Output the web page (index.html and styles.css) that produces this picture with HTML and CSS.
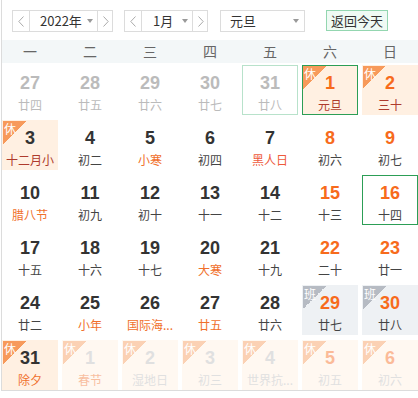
FILE: index.html
```html
<!DOCTYPE html>
<html lang="zh">
<head>
<meta charset="utf-8">
<link rel="stylesheet" href="styles.css">
</head>
<body>
<div class="cal">
  <div class="bar">
    <div class="picker year">
      <span class="arr"><svg width="6" height="11" viewBox="0 0 6 11"><polyline points="5.5,0.5 0.8,5.5 5.5,10.5" fill="none" stroke="#aaa" stroke-width="1"/></svg></span>
      <span class="mid"><span class="val">2022年</span><i class="tri"></i></span>
      <span class="arr"><svg width="6" height="11" viewBox="0 0 6 11"><polyline points="0.5,0.5 5.2,5.5 0.5,10.5" fill="none" stroke="#aaa" stroke-width="1"/></svg></span>
    </div>
    <div class="picker month">
      <span class="arr"><svg width="6" height="11" viewBox="0 0 6 11"><polyline points="5.5,0.5 0.8,5.5 5.5,10.5" fill="none" stroke="#aaa" stroke-width="1"/></svg></span>
      <span class="mid"><span class="val">1月</span><i class="tri"></i></span>
      <span class="arr"><svg width="6" height="11" viewBox="0 0 6 11"><polyline points="0.5,0.5 5.2,5.5 0.5,10.5" fill="none" stroke="#aaa" stroke-width="1"/></svg></span>
    </div>
    <div class="select"><span class="val">元旦</span><i class="tri"></i></div>
    <div class="today">返回今天</div>
  </div>
  <div class="week">
    <span>一</span><span>二</span><span>三</span><span>四</span><span>五</span><span>六</span><span>日</span>
  </div>
  <div class="grid">
    <div class="cell other"><b>27</b><em>廿四</em></div>
    <div class="cell other"><b>28</b><em>廿五</em></div>
    <div class="cell other"><b>29</b><em>廿六</em></div>
    <div class="cell other"><b>30</b><em>廿七</em></div>
    <div class="cell other hover"><b>31</b><em>廿八</em></div>
    <div class="cell rest wkend hl sel"><i class="badge">休</i><b>1</b><em>元旦</em></div>
    <div class="cell rest wkend hl"><i class="badge">休</i><b>2</b><em>三十</em></div>

    <div class="cell rest hl"><i class="badge">休</i><b>3</b><em>十二月小</em></div>
    <div class="cell"><b>4</b><em>初二</em></div>
    <div class="cell fest"><b>5</b><em>小寒</em></div>
    <div class="cell"><b>6</b><em>初四</em></div>
    <div class="cell fest red"><b>7</b><em>黑人日</em></div>
    <div class="cell wkend"><b>8</b><em>初六</em></div>
    <div class="cell wkend"><b>9</b><em>初七</em></div>

    <div class="cell fest"><b>10</b><em>腊八节</em></div>
    <div class="cell"><b>11</b><em>初九</em></div>
    <div class="cell"><b>12</b><em>初十</em></div>
    <div class="cell"><b>13</b><em>十一</em></div>
    <div class="cell"><b>14</b><em>十二</em></div>
    <div class="cell wkend"><b>15</b><em>十三</em></div>
    <div class="cell wkend sel"><b>16</b><em>十四</em></div>

    <div class="cell"><b>17</b><em>十五</em></div>
    <div class="cell"><b>18</b><em>十六</em></div>
    <div class="cell"><b>19</b><em>十七</em></div>
    <div class="cell fest"><b>20</b><em>大寒</em></div>
    <div class="cell"><b>21</b><em>十九</em></div>
    <div class="cell wkend"><b>22</b><em>二十</em></div>
    <div class="cell wkend"><b>23</b><em>廿一</em></div>

    <div class="cell"><b>24</b><em>廿二</em></div>
    <div class="cell fest"><b>25</b><em>小年</em></div>
    <div class="cell fest"><b>26</b><em>国际海...</em></div>
    <div class="cell fest"><b>27</b><em>廿五</em></div>
    <div class="cell"><b>28</b><em>廿六</em></div>
    <div class="cell work wkend"><i class="badge">班</i><b>29</b><em>廿七</em></div>
    <div class="cell work wkend"><i class="badge">班</i><b>30</b><em>廿八</em></div>

    <div class="cell rest fest"><i class="badge">休</i><b>31</b><em>除夕</em></div>
    <div class="cell rest other fade fest"><i class="badge">休</i><b>1</b><em>春节</em></div>
    <div class="cell rest other fade"><i class="badge">休</i><b>2</b><em>湿地日</em></div>
    <div class="cell rest other fade"><i class="badge">休</i><b>3</b><em>初三</em></div>
    <div class="cell rest other fade"><i class="badge">休</i><b>4</b><em>世界抗...</em></div>
    <div class="cell rest other fade wkend"><i class="badge">休</i><b>5</b><em>初五</em></div>
    <div class="cell rest other fade wkend"><i class="badge">休</i><b>6</b><em>初六</em></div>
  </div>
</div>
</body>
</html>
```

FILE: styles.css
```css
html, body {
  margin: 0;
  padding: 0;
  overflow: hidden;
  background: #fff;
}
body {
  font-family: "Noto Sans CJK SC", "Liberation Sans", sans-serif;
  color: #333;
}
.cal {
  margin-left: 1px;
  width: 430px;
  border-left: 1px solid #dcdcdc;
  border-bottom: 1px solid #dcdcdc;
}
.bar {
  height: 40px;
  box-sizing: border-box;
  padding: 10px 0 0 10px;
  display: flex;
  align-items: flex-start;
  white-space: nowrap;
}
.picker {
  display: flex;
  height: 22px;
  box-sizing: border-box;
  border: 1px solid #dcdcdc;
  flex-shrink: 0;
}
.picker .arr {
  width: 16px;
  flex-shrink: 0;
  display: flex;
  align-items: center;
  justify-content: center;
}
.picker .mid {
  display: flex;
  align-items: center;
  flex-shrink: 0;
  border-left: 1px solid #dcdcdc;
  border-right: 1px solid #dcdcdc;
  box-sizing: border-box;
  font-size: 13px;
  line-height: 20px;
  color: #333;
  white-space: nowrap;
}
.year { width: 101px; }
.year .mid { width: 69px; padding-left: 10px; }
.year .mid .tri { margin-left: 5px; }
.month { width: 84px; margin-left: 11px; }
.month .mid { width: 52px; padding-left: 11px; }
.month .mid .tri { margin-left: 9px; }
.tri {
  display: inline-block;
  flex-shrink: 0;
  width: 0;
  height: 0;
  border-left: 3.5px solid transparent;
  border-right: 3.5px solid transparent;
  border-top: 4px solid #999;
}
.select {
  margin-left: 12px;
  width: 85px;
  height: 22px;
  flex-shrink: 0;
  box-sizing: border-box;
  border: 1px solid #dcdcdc;
  display: flex;
  align-items: center;
  justify-content: space-between;
  padding: 0 5px 0 9px;
  font-size: 13px;
  line-height: 20px;
}
.today {
  margin-left: 21px;
  width: 62px;
  height: 21px;
  flex-shrink: 0;
  box-sizing: border-box;
  border: 1px solid #93d6b0;
  background: #effaf4;
  font-size: 13px;
  line-height: 19px;
  text-align: center;
  color: #333;
}
.week {
  height: 23px;
  background: #f3f7f8;
  display: grid;
  grid-template-columns: repeat(7, 56px);
  column-gap: 4px;
  font-size: 14px;
  line-height: 23px;
  color: #666;
  text-align: center;
}
.grid {
  margin-top: 2px;
  display: grid;
  grid-template-columns: repeat(7, 56px);
  grid-auto-rows: 50px;
  column-gap: 4px;
  row-gap: 5px;
}
.cell {
  position: relative;
  box-sizing: border-box;
  border: 1px solid transparent;
  display: flex;
  flex-direction: column;
  align-items: center;
  padding-top: 5px;
}
.cell b {
  font-family: "Liberation Sans", Arial, sans-serif;
  font-weight: bold;
  font-size: 18px;
  line-height: 24px;
  color: #333;
}
.cell em {
  font-style: normal;
  font-size: 12px;
  line-height: 16px;
  margin-top: 2px;
  color: #444;
  white-space: nowrap;
}
.other b, .other em { color: #bbb; }
.wkend b { color: #f76b1c; }
.fest em { color: #f0702c; }
.red em { color: #ee5a3c; }
.hl em { color: #ae3a2c; }
.rest { background: #fff0e2; }
.work { background: #eef1f4; }
.sel { border-color: #2c9e56; }
.hover { border-color: #b8e2cb; }
.fade { opacity: 0.45; }
.badge {
  position: absolute;
  left: 0;
  top: 0;
  width: 23px;
  height: 23px;
  background: linear-gradient(135deg, #f79a5b 50%, transparent 50%);
  color: #fff;
  font-style: normal;
  font-size: 12px;
  line-height: 13px;
  padding: 1px 0 0 1px;
  box-sizing: border-box;
}
.work .badge {
  background: linear-gradient(135deg, #b6bbc3 50%, transparent 50%);
}
```
